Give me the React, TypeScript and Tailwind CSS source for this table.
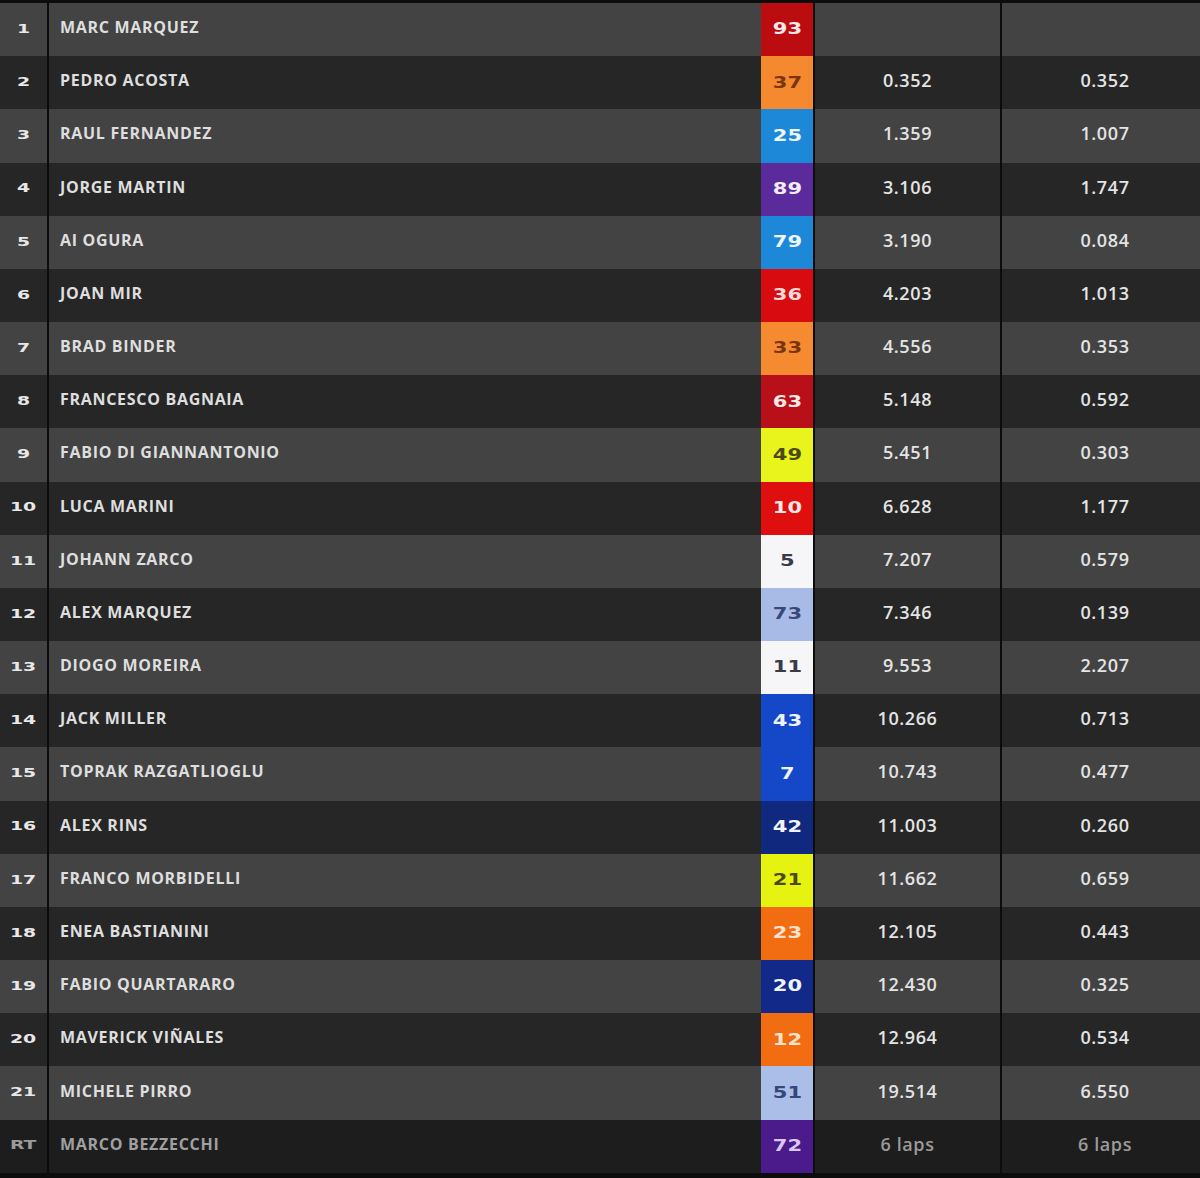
const riders: {
  pos: string;
  name: string;
  num: string;
  bg: string;
  fg: string;
  gap: string;
  int: string;
}[] = [
  { pos: "1", name: "MARC MARQUEZ", num: "93", bg: "bg-[#bb0d10]", fg: "text-[#fbe9e9]", gap: "", int: "" },
  { pos: "2", name: "PEDRO ACOSTA", num: "37", bg: "bg-[#f5892f]", fg: "text-[#7a3410]", gap: "0.352", int: "0.352" },
  { pos: "3", name: "RAUL FERNANDEZ", num: "25", bg: "bg-[#1d88d8]", fg: "text-[#eef6ff]", gap: "1.359", int: "1.007" },
  { pos: "4", name: "JORGE MARTIN", num: "89", bg: "bg-[#5b2b9c]", fg: "text-[#f3ecff]", gap: "3.106", int: "1.747" },
  { pos: "5", name: "AI OGURA", num: "79", bg: "bg-[#1d88d8]", fg: "text-[#eef6ff]", gap: "3.190", int: "0.084" },
  { pos: "6", name: "JOAN MIR", num: "36", bg: "bg-[#d80c10]", fg: "text-[#fbdada]", gap: "4.203", int: "1.013" },
  { pos: "7", name: "BRAD BINDER", num: "33", bg: "bg-[#f68a30]", fg: "text-[#7a3410]", gap: "4.556", int: "0.353" },
  { pos: "8", name: "FRANCESCO BAGNAIA", num: "63", bg: "bg-[#b80f18]", fg: "text-[#fbe9e9]", gap: "5.148", int: "0.592" },
  { pos: "9", name: "FABIO DI GIANNANTONIO", num: "49", bg: "bg-[#e8f41c]", fg: "text-[#4a4a12]", gap: "5.451", int: "0.303" },
  { pos: "10", name: "LUCA MARINI", num: "10", bg: "bg-[#e00f0f]", fg: "text-[#fde6e6]", gap: "6.628", int: "1.177" },
  { pos: "11", name: "JOHANN ZARCO", num: "5", bg: "bg-[#f6f6f8]", fg: "text-[#3a3a48]", gap: "7.207", int: "0.579" },
  { pos: "12", name: "ALEX MARQUEZ", num: "73", bg: "bg-[#a8bbe6]", fg: "text-[#3a4878]", gap: "7.346", int: "0.139" },
  { pos: "13", name: "DIOGO MOREIRA", num: "11", bg: "bg-[#f6f6f8]", fg: "text-[#3a3a48]", gap: "9.553", int: "2.207" },
  { pos: "14", name: "JACK MILLER", num: "43", bg: "bg-[#1548c8]", fg: "text-[#eef3ff]", gap: "10.266", int: "0.713" },
  { pos: "15", name: "TOPRAK RAZGATLIOGLU", num: "7", bg: "bg-[#1548c8]", fg: "text-[#eef3ff]", gap: "10.743", int: "0.477" },
  { pos: "16", name: "ALEX RINS", num: "42", bg: "bg-[#10297e]", fg: "text-[#eef3ff]", gap: "11.003", int: "0.260" },
  { pos: "17", name: "FRANCO MORBIDELLI", num: "21", bg: "bg-[#e6f20f]", fg: "text-[#4a4a12]", gap: "11.662", int: "0.659" },
  { pos: "18", name: "ENEA BASTIANINI", num: "23", bg: "bg-[#f26c12]", fg: "text-[#fde3cf]", gap: "12.105", int: "0.443" },
  { pos: "19", name: "FABIO QUARTARARO", num: "20", bg: "bg-[#13298a]", fg: "text-[#eef3ff]", gap: "12.430", int: "0.325" },
  { pos: "20", name: "MAVERICK VIÑALES", num: "12", bg: "bg-[#f26c12]", fg: "text-[#fde3cf]", gap: "12.964", int: "0.534" },
  { pos: "21", name: "MICHELE PIRRO", num: "51", bg: "bg-[#abbee8]", fg: "text-[#34467a]", gap: "19.514", int: "6.550" },
  { pos: "RT", name: "MARCO BEZZECCHI", num: "72", bg: "bg-[#4c1b8b]", fg: "text-[#d9c8f5]", gap: "6 laps", int: "6 laps" },
];

const wide = "inline-block font-['DejaVu_Sans',sans-serif] font-bold";
const sans = "font-['Open_Sans',sans-serif]";

function Row({ r, i }: { r: (typeof riders)[number]; i: number }) {
  const retired = r.pos === "RT";
  const rowBg = retired ? "bg-[#1d1d1d]" : i % 2 === 0 ? "bg-[#434343]" : "bg-[#262626]";
  const text = retired ? "text-[#9a9a9a]" : "text-[#e4e4e4]";

  return (
    <div className={`flex h-[53.18px] ${rowBg}`}>
      <div className="w-[49px] border-r-2 border-[#0c0c0c] flex items-center justify-center pb-[2px]">
        <span className={`${wide} text-[13px] scale-x-[1.45] ${retired ? "text-[#9a9a9a]" : "text-[#e8e8e8]"}`}>
          {r.pos}
        </span>
      </div>
      <div className="flex-1 flex items-center pl-[11px] pb-[5px]">
        <span className={`${sans} font-bold text-[16px] tracking-[0.7px] ${retired ? "text-[#a0a0a0]" : "text-[#dedede]"}`}>
          {r.name}
        </span>
      </div>
      <div className={`w-[54px] border-r-2 border-[#0c0c0c] flex items-center justify-center ${r.bg}`}>
        <span className={`${wide} text-[15px] scale-x-[1.4] ${r.fg}`}>{r.num}</span>
      </div>
      <div className="w-[187px] border-r-2 border-[#0c0c0c] flex items-center justify-center pb-[4px]">
        <span className={`${sans} font-semibold text-[18px] tracking-[0.6px] ${text}`}>{r.gap}</span>
      </div>
      <div className="w-[198px] flex items-center justify-center pl-[8px] pb-[4px]">
        <span className={`${sans} font-semibold text-[18px] tracking-[0.6px] ${text}`}>{r.int}</span>
      </div>
    </div>
  );
}

export default function App() {
  return (
    <div className="w-[1200px] h-[1178px] bg-[#0c0c0c] pt-[3px] overflow-hidden">
      {riders.map((r, i) => (
        <Row key={r.pos} r={r} i={i} />
      ))}
    </div>
  );
}
